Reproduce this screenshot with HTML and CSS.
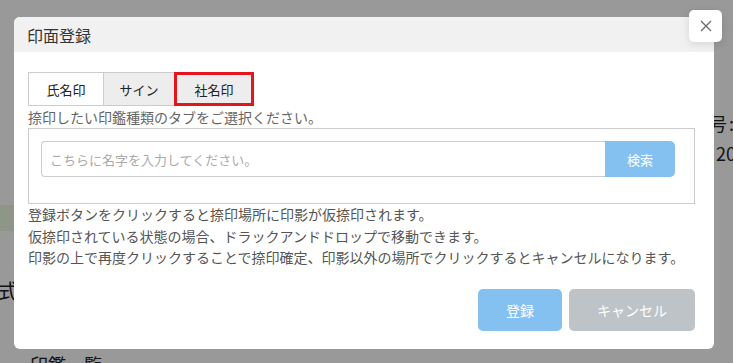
FILE: index.html
```html
<!DOCTYPE html>
<html lang="ja">

<head>
  <meta charset="UTF-8">
  <meta name="viewport" content="width=device-width, initial-scale=1.0">
  <title>印面登録</title>
  <link rel="stylesheet" href="styles.css">
</head>

<body>

  <!-- Page behind the dialog -->
  <div class="page">
    <div class="page-side">
      <div class="side-label">番号:</div>
      <div class="side-value">2024</div>
    </div>
    <div class="page-band"></div>
    <div class="page-heading">書式</div>
    <div class="page-foot">印鑑一覧</div>
  </div>

  <div class="overlay"></div>

  <!-- Stamp registration dialog -->
  <div class="modal">
    <div class="modal-header">
      <h2>印面登録</h2>
    </div>
    <button class="close-btn" type="button" aria-label="閉じる">
      <svg width="12" height="12" viewBox="0 0 12 12">
        <path d="M1 1 L11 11 M11 1 L1 11" stroke="#6b6b6b" stroke-width="1.3" fill="none" />
      </svg>
    </button>

    <div class="modal-body">
      <!-- Tabs -->
      <div class="tabs">
        <div class="tab">氏名印</div>
        <div class="tab muted">サイン</div>
        <div class="tab muted selected">社名印</div>
      </div>
      <p class="hint">捺印したい印鑑種類のタブをご選択ください。</p>

      <div class="tab-panel">
        <div class="input-group">
          <input type="text" placeholder="こちらに名字を入力してください。">
          <button type="button" class="search-btn">検索</button>
        </div>
      </div>

      <div class="notes">
        <p>登録ボタンをクリックすると捺印場所に印影が仮捺印されます。</p>
        <p>仮捺印されている状態の場合、ドラックアンドドロップで移動できます。</p>
        <p>印影の上で再度クリックすることで捺印確定、印影以外の場所でクリックするとキャンセルになります。</p>
      </div>

      <div class="actions">
        <button type="button" class="btn btn-primary">登録</button>
        <button type="button" class="btn btn-cancel">キャンセル</button>
      </div>
    </div>
  </div>

</body>

</html>
```

FILE: styles.css
```css
/* Global Styles */
body {
  font-family: "Noto Sans CJK JP", "Noto Sans", sans-serif;
  margin: 0;
  padding: 0;
  width: 733px;
  height: 363px;
  overflow: hidden;
  background-color: #fff;
}

p {
  margin: 0;
}

/* Page behind the dialog */
.page {
  display: flow-root;
  height: 363px;
  padding-top: 108px;
  box-sizing: border-box;
  color: #222;
}

.page-side {
  margin-left: 716px;
  font-size: 18px;
  line-height: 30px;
  white-space: nowrap;
}

.side-label {
  margin-left: -27px;
  letter-spacing: 2px;
}

.page-band {
  height: 26px;
  margin-top: 37px;
  width: 40px;
  background-color: #edfce2;
}

.page-heading {
  margin: 45px 0 0 -22px;
  font-size: 20px;
  line-height: 29px;
}

.page-foot {
  margin: 46px 0 0 30px;
  font-size: 18px;
  line-height: 26px;
}

.overlay {
  position: fixed;
  inset: 0;
  background-color: rgba(0, 0, 0, 0.4);
}

/* Dialog */
.modal {
  position: absolute;
  left: 14px;
  top: 17px;
  width: 700px;
  height: 332px;
  background-color: #fff;
  border-radius: 6px;
}

.modal-header {
  height: 35px;
  background-color: #f1f1f1;
  border-radius: 6px 6px 0 0;
  display: flex;
  align-items: center;
  padding-left: 13px;
}

.modal-header h2 {
  margin: 0;
  font-size: 16px;
  font-weight: normal;
  color: #333;
}

.close-btn {
  position: absolute;
  top: -7px;
  right: -8px;
  width: 33px;
  height: 32px;
  border: none;
  border-radius: 5px;
  background-color: #fff;
  box-shadow: 0 2px 8px rgba(0, 0, 0, 0.12);
  display: flex;
  align-items: center;
  justify-content: center;
  padding: 0;
}

.modal-body {
  padding: 20px 19px 18px 14px;
}

/* Tabs */
.tabs {
  display: flex;
}

.tab {
  height: 34px;
  box-sizing: border-box;
  border: 1px solid #ccc;
  background-color: #fff;
  font-size: 13px;
  color: #222;
  display: flex;
  align-items: center;
  justify-content: center;
  width: 76px;
}

.tab.muted {
  background-color: #ededed;
  width: 72px;
  margin-left: -1px;
}

.tab.selected {
  width: 80px;
  border: 3px solid #e3161b;
}

.hint {
  font-size: 14px;
  color: #666;
  line-height: 22px;
}

.tab-panel {
  border: 1px solid #ccc;
  padding: 12px 19px 26px 12px;
}

.input-group {
  display: flex;
  height: 36px;
}

.input-group input {
  flex: 1;
  box-sizing: border-box;
  border: 1px solid #ccc;
  border-right: none;
  border-radius: 4px 0 0 4px;
  padding: 0 8px;
  font-family: inherit;
  font-size: 13px;
  color: #333;
}

.input-group input::placeholder {
  color: #aaa;
}

.search-btn {
  width: 70px;
  border: none;
  border-radius: 0 5px 5px 0;
  background-color: #85c1f0;
  color: #fff;
  font-family: inherit;
  font-size: 13px;
}

.notes {
  font-size: 14px;
  color: #555;
  line-height: 21.5px;
}

/* Footer buttons */
.actions {
  display: flex;
  justify-content: flex-end;
  gap: 7px;
  margin-top: 20px;
}

.btn {
  height: 42px;
  border: none;
  border-radius: 5px;
  color: #fff;
  font-family: inherit;
  font-size: 14px;
}

.btn-primary {
  width: 84px;
  background-color: #85c1f0;
}

.btn-cancel {
  width: 126px;
  background-color: #bec3c7;
}
```
